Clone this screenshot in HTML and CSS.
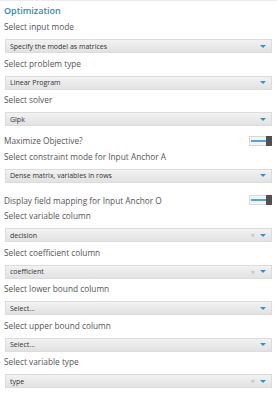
FILE: index.html
```html
<!DOCTYPE html>
<html>
<head>
<meta charset="utf-8">
<link rel="stylesheet" href="styles.css">
</head>
<body>
<div class="panel">
  <div class="title">Optimization</div>

  <div class="label">Select input mode</div>
  <div class="select"><span class="value">Specify the model as matrices</span><span class="arrow"></span></div>

  <div class="label">Select problem type</div>
  <div class="select"><span class="value">Linear Program</span><span class="arrow"></span></div>

  <div class="label">Select solver</div>
  <div class="select"><span class="value">Glpk</span><span class="arrow"></span></div>

  <div class="toggle-row first">
    <span class="toggle-label">Maximize Objective?</span>
    <span class="toggle"><span class="track"></span><span class="knob"></span></span>
  </div>

  <div class="label">Select constraint mode for Input Anchor A</div>
  <div class="select"><span class="value">Dense matrix, variables in rows</span><span class="arrow"></span></div>

  <div class="toggle-row second">
    <span class="toggle-label">Display field mapping for Input Anchor O</span>
    <span class="toggle"><span class="track"></span><span class="knob"></span></span>
  </div>

  <div class="label">Select variable column</div>
  <div class="select"><span class="value">decision</span><span class="clear">×</span><span class="arrow"></span></div>

  <div class="label">Select coefficient column</div>
  <div class="select"><span class="value">coefficient</span><span class="clear">×</span><span class="arrow"></span></div>

  <div class="label">Select lower bound column</div>
  <div class="select"><span class="value">Select...</span><span class="arrow"></span></div>

  <div class="label">Select upper bound column</div>
  <div class="select"><span class="value">Select...</span><span class="arrow"></span></div>

  <div class="label">Select variable type</div>
  <div class="select"><span class="value">type</span><span class="clear">×</span><span class="arrow"></span></div>
</div>
</body>
</html>
```

FILE: styles.css
```css
html, body {
  margin: 0;
  padding: 0;
  background: #ffffff;
}
body {
  font-family: "Open Sans", "Noto Sans", sans-serif;
  color: #5a5a5a;
}
.panel {
  width: 277px;
  height: 400px;
  box-sizing: border-box;
  border-top: 1px solid #ececec;
  padding: 3px 5px 0 4px;
  overflow: hidden;
}
.title {
  font-size: 9px;
  font-weight: 600;
  line-height: 14px;
  color: #3589b3;
  margin-bottom: 2px;
}
.label {
  font-size: 8.3px;
  line-height: 14px;
  color: #555555;
  margin-bottom: 5px;
  white-space: nowrap;
}
.select {
  display: flex;
  align-items: center;
  height: 14px;
  box-sizing: border-box;
  margin-left: 1px;
  margin-bottom: 3.5px;
  padding: 0 5px 0 4px;
  border: 1px solid #dcdcdc;
  background: linear-gradient(#f2f2f2, #e2e2e2);
}
.value {
  flex: 1;
  font-size: 7px;
  font-weight: 500;
  color: #333333;
  white-space: nowrap;
}
.clear {
  font-size: 8px;
  line-height: 8px;
  color: #b0b0b0;
  margin-right: 5px;
}
.arrow {
  width: 0;
  height: 0;
  border-left: 3px solid transparent;
  border-right: 3px solid transparent;
  border-top: 3.5px solid #2b95d0;
}
.toggle-row {
  display: flex;
  align-items: center;
  justify-content: space-between;
  height: 18px;
}
.toggle-row.first {
  margin-top: 5.5px;
}
.toggle-row.second {
  margin-top: 8.5px;
}
.toggle-label {
  font-size: 8.3px;
  color: #555555;
}
.toggle {
  display: flex;
  align-items: center;
  width: 23px;
  height: 10px;
  box-sizing: border-box;
  border: 1px solid #d8d8d8;
  background: #f4f4f4;
}
.track {
  flex: 1;
  height: 2px;
  background: #4aa7d8;
  margin-left: 1px;
}
.knob {
  width: 6px;
  height: 10px;
  background: #505050;
  margin-right: -1px;
}
```
